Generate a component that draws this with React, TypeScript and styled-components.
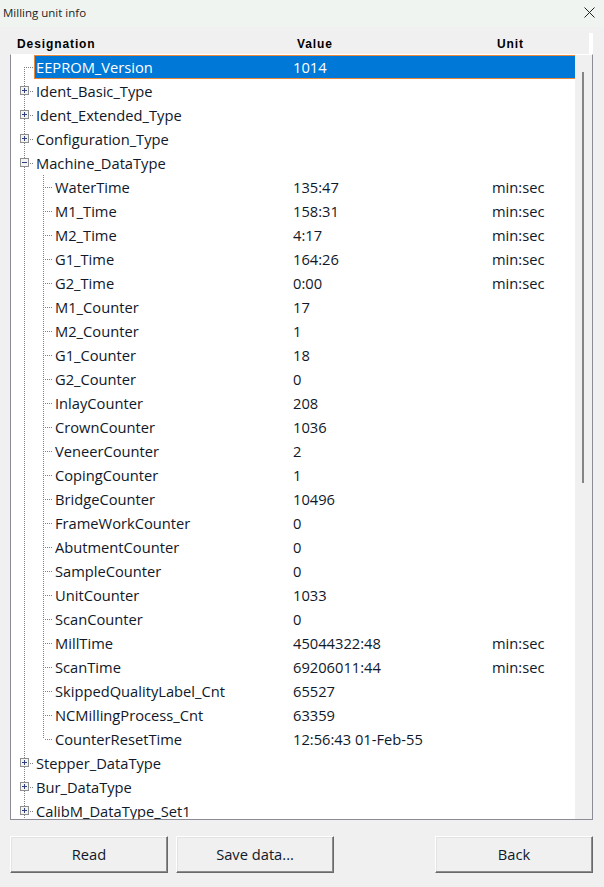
import React from 'react';
import styled, { createGlobalStyle } from 'styled-components';

const GlobalStyle = createGlobalStyle`
	html, body {
		margin: 0;
		padding: 0;
		background: #f0f0f0;
	}
	* {
		box-sizing: border-box;
	}
`;

const Window = styled.div`
	width: 604px;
	height: 887px;
	display: flex;
	flex-direction: column;
	background: #f0f0f0;
	font-family: 'Open Sans', 'Liberation Sans', sans-serif;
	color: #000;
	overflow: hidden;
`;

const TitleBar = styled.div`
	height: 27px;
	flex: none;
	display: flex;
	align-items: center;
	justify-content: space-between;
	padding: 0 9px 3px 3px;
	background: #f0f4f0;
	font-size: 11.5px;
	color: #222;
`;

const CloseIcon = styled.svg`
	width: 11px;
	height: 11px;
	display: block;
`;

const Body = styled.div`
	flex: 1;
	display: flex;
	flex-direction: column;
	padding: 6px 11px 0 10px;
`;

const HeaderRow = styled.div`
	height: 21px;
	flex: none;
	display: grid;
	grid-template-columns: 280px 200px 1fr;
	align-items: center;
	padding-left: 7px;
	font-family: 'Liberation Sans', Arial, sans-serif;
	font-size: 12px;
	font-weight: 700;
	letter-spacing: 0.9px;
	border-right: 4px solid #fff;
`;

const TreeBox = styled.div`
	height: 766px;
	flex: none;
	display: flex;
	background: #fff;
	border-top: 1px solid #fff;
	border-left: 1px solid #8c8c96;
	border-right: 1px solid #8c8c96;
	border-bottom: 1px solid #8c8c96;
`;

const TreeList = styled.div`
	flex: 1;
	min-width: 0;
	overflow: hidden;
`;

const Row = styled.div`
	height: 24px;
	display: grid;
	grid-template-columns: 282px 199px 1fr;
	align-items: stretch;
	font-size: 14.7px;
	color: #10182a;
	white-space: nowrap;
`;

const NameCell = styled.div`
	display: flex;
	align-items: stretch;
	min-width: 0;
`;

const dots = (color: string) =>
	`repeating-linear-gradient(to bottom, ${color} 0 1px, transparent 1px 2px)`;

const Guide = styled.div<{ $width: number; $line: 'none' | 'full' | 'half' | 'lower' }>`
	position: relative;
	width: ${(props) => props.$width}px;
	flex: none;
	background-image: ${(props) => (props.$line === 'none' ? 'none' : dots('#808080'))};
	background-repeat: no-repeat;
	background-size: 1px
		${(props) => (props.$line === 'half' || props.$line === 'lower' ? '50%' : '100%')};
	background-position: 13px ${(props) => (props.$line === 'lower' ? '100%' : '0')};
`;

const Branch = styled.div<{ $width: number }>`
	width: ${(props) => props.$width}px;
	flex: none;
	align-self: center;
	height: 1px;
	background-image: repeating-linear-gradient(to right, #808080 0 1px, transparent 1px 2px);
`;

const ToggleBox = styled.svg`
	position: absolute;
	left: 9px;
	top: 7px;
	width: 9px;
	height: 9px;
	display: block;
`;

const Label = styled.div`
	display: flex;
	align-items: center;
	padding: 0 2px;
`;

const ValueCell = styled.div`
	display: flex;
	align-items: center;
`;

const SelectedRow = styled.div`
	height: 24px;
	display: flex;
	align-items: stretch;
	font-size: 14.7px;
	white-space: nowrap;
`;

const SelectedBar = styled.div`
	flex: 1;
	display: grid;
	grid-template-columns: 257px 1fr;
	align-items: center;
	padding-left: 1px;
	color: #fff;
	background: #0078d7;
	border: 1px solid #e8893c;
	border-width: 1px 0 1px 1px;
`;

const ScrollTrack = styled.div`
	width: 17px;
	flex: none;
	background: #f0f0f0;
	padding: 17px 0 0 7px;
`;

const ScrollThumb = styled.div`
	width: 2px;
	height: 411px;
	background: #858585;
`;

const ButtonBar = styled.div`
	display: flex;
	margin-top: 16px;
	gap: 8px;
`;

const Button = styled.button<{ $push?: boolean }>`
	width: 158px;
	height: 37px;
	margin-left: ${(props) => (props.$push ? 'auto' : '0')};
	padding: 0 0 2px;
	background: #f0f0f0;
	font-family: 'Open Sans', 'Liberation Sans', sans-serif;
	font-size: 14.7px;
	color: #10182a;
	border: 1px solid;
	border-color: #fff #696969 #696969 #fff;
	box-shadow: inset -1px -1px 0 #8c8c8c, inset 1px 1px 0 #e3e3e3;
`;

type Kind = 'closed' | 'open';

const Toggle = ({ kind }: { kind: Kind }) => (
	<ToggleBox viewBox="0 0 9 9">
		<rect x="0.5" y="0.5" width="8" height="8" fill="#f4f4f4" stroke="#8e8e8e" />
		<path d="M2 4.5h5" stroke="#2f3f7f" />
		{kind === 'closed' && <path d="M4.5 2v5" stroke="#2f3f7f" />}
	</ToggleBox>
);

const TopRow = ({ name, kind }: { name: string; kind: Kind }) => (
	<Row>
		<NameCell>
			<Guide $width={15} $line="full">
				<Toggle kind={kind} />
			</Guide>
			<Branch $width={8} />
			<Label>{name}</Label>
		</NameCell>
		<ValueCell />
		<ValueCell />
	</Row>
);

const ChildRow = ({
	name,
	value,
	unit,
	last
}: {
	name: string;
	value: string;
	unit?: string;
	last?: boolean;
}) => (
	<Row>
		<NameCell>
			<Guide $width={19} $line="full" />
			<Guide $width={15} $line={last ? 'half' : 'full'} />
			<Branch $width={8} />
			<Label>{name}</Label>
		</NameCell>
		<ValueCell>{value}</ValueCell>
		<ValueCell>{unit}</ValueCell>
	</Row>
);

const machineData: { name: string; value: string; unit?: string }[] = [
	{ name: 'WaterTime', value: '135:47', unit: 'min:sec' },
	{ name: 'M1_Time', value: '158:31', unit: 'min:sec' },
	{ name: 'M2_Time', value: '4:17', unit: 'min:sec' },
	{ name: 'G1_Time', value: '164:26', unit: 'min:sec' },
	{ name: 'G2_Time', value: '0:00', unit: 'min:sec' },
	{ name: 'M1_Counter', value: '17' },
	{ name: 'M2_Counter', value: '1' },
	{ name: 'G1_Counter', value: '18' },
	{ name: 'G2_Counter', value: '0' },
	{ name: 'InlayCounter', value: '208' },
	{ name: 'CrownCounter', value: '1036' },
	{ name: 'VeneerCounter', value: '2' },
	{ name: 'CopingCounter', value: '1' },
	{ name: 'BridgeCounter', value: '10496' },
	{ name: 'FrameWorkCounter', value: '0' },
	{ name: 'AbutmentCounter', value: '0' },
	{ name: 'SampleCounter', value: '0' },
	{ name: 'UnitCounter', value: '1033' },
	{ name: 'ScanCounter', value: '0' },
	{ name: 'MillTime', value: '45044322:48', unit: 'min:sec' },
	{ name: 'ScanTime', value: '69206011:44', unit: 'min:sec' },
	{ name: 'SkippedQualityLabel_Cnt', value: '65527' },
	{ name: 'NCMillingProcess_Cnt', value: '63359' },
	{ name: 'CounterResetTime', value: '12:56:43 01-Feb-55' }
];

const App = () => {
	return (
		<>
			<GlobalStyle />
			<Window>
				<TitleBar>
					<span>Milling unit info</span>
					<CloseIcon viewBox="0 0 11 11">
						<path d="M0.5 0.5l10 10M10.5 0.5l-10 10" stroke="#222" strokeWidth="1" />
					</CloseIcon>
				</TitleBar>
				<Body>
					<HeaderRow>
						<span>Designation</span>
						<span>Value</span>
						<span>Unit</span>
					</HeaderRow>
					<TreeBox>
						<TreeList>
							<SelectedRow>
								<Guide $width={15} $line="lower" />
								<Branch $width={8} />
								<SelectedBar>
									<span>EEPROM_Version</span>
									<span>1014</span>
								</SelectedBar>
							</SelectedRow>
							<TopRow name="Ident_Basic_Type" kind="closed" />
							<TopRow name="Ident_Extended_Type" kind="closed" />
							<TopRow name="Configuration_Type" kind="closed" />
							<TopRow name="Machine_DataType" kind="open" />
							{machineData.map((item, index) => (
								<ChildRow
									key={item.name}
									name={item.name}
									value={item.value}
									unit={item.unit}
									last={index === machineData.length - 1}
								/>
							))}
							<TopRow name="Stepper_DataType" kind="closed" />
							<TopRow name="Bur_DataType" kind="closed" />
							<TopRow name="CalibM_DataType_Set1" kind="closed" />
						</TreeList>
						<ScrollTrack>
							<ScrollThumb />
						</ScrollTrack>
					</TreeBox>
					<ButtonBar>
						<Button>Read</Button>
						<Button>Save data...</Button>
						<Button $push>Back</Button>
					</ButtonBar>
				</Body>
			</Window>
		</>
	);
};

export default App;
